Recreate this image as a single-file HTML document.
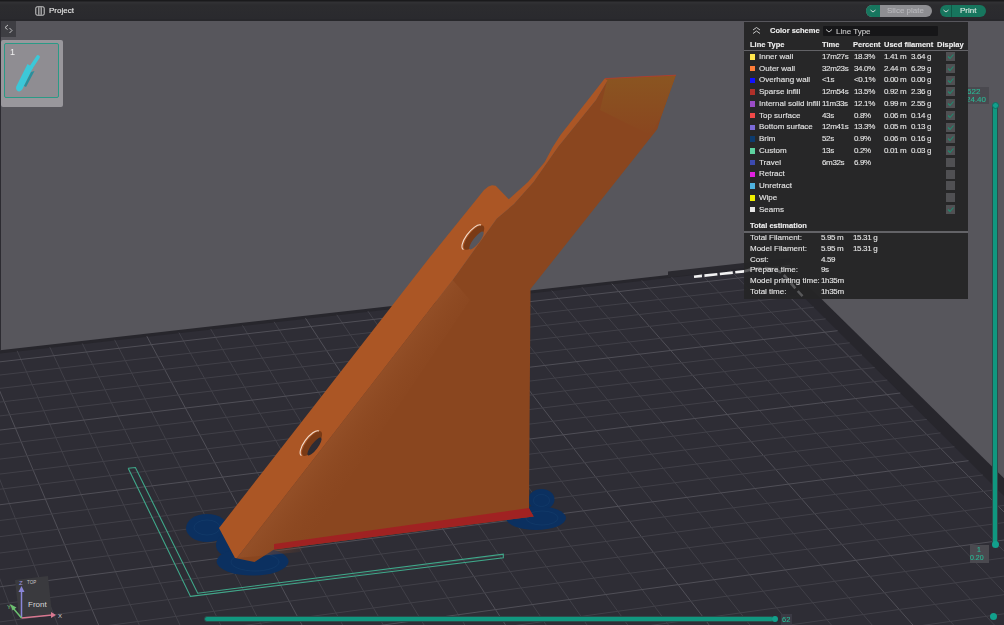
<!DOCTYPE html>
<html><head><meta charset="utf-8">
<style>
*{margin:0;padding:0;box-sizing:border-box}
html,body{width:1004px;height:625px;overflow:hidden;background:#57565c;font-family:"Liberation Sans",sans-serif;color:#e6e6e6}
#scene{position:absolute;left:0;top:0}
.abs{position:absolute}
#topbar{position:absolute;left:0;top:0;width:1004px;height:21px;background:linear-gradient(#1a1a1c 0,#1a1a1c 1px,#323235 2px,#2c2c2f 5px,#2a2a2e 19px,#242428 20px,#2a2a2e 21px)}
#panel{position:absolute;left:744px;top:22px;width:224px;height:277px;background:rgba(37,37,39,0.96)}
.t{position:absolute;will-change:transform;font-size:8px;line-height:10px;white-space:pre;color:#e4e4e4;-webkit-text-stroke:0.12px currentColor}
.b{font-weight:bold;font-size:7.5px}
.sw{position:absolute;width:5.3px;height:5.6px}
.cb{position:absolute;width:9px;height:9px;background:#505053}
.num{letter-spacing:-0.35px}
</style></head><body>
<svg id="scene" width="1004" height="625" viewBox="0 0 1004 625">
<polygon points="-183.0,370.8 783.8,261.9 1141.6,613.4 -55.2,786.0" fill="#27262c"/>
<polygon points="-182.0,374.0 772.6,266.2 1124.6,615.8 -55.2,786.0" fill="#2e2d35"/>
<line x1="-182.2" y1="373.3" x2="-55.2" y2="786.0" stroke="#504f57" stroke-width="1"/>
<line x1="-148.6" y1="369.5" x2="-12.9" y2="779.9" stroke="#414048" stroke-width="1"/>
<line x1="-115.1" y1="365.8" x2="29.2" y2="773.8" stroke="#414048" stroke-width="1"/>
<line x1="-81.8" y1="362.0" x2="71.0" y2="767.8" stroke="#414048" stroke-width="1"/>
<line x1="-48.7" y1="358.3" x2="112.6" y2="761.8" stroke="#414048" stroke-width="1"/>
<line x1="-15.7" y1="354.5" x2="153.9" y2="755.9" stroke="#504f57" stroke-width="1"/>
<line x1="17.1" y1="350.8" x2="194.9" y2="749.9" stroke="#414048" stroke-width="1"/>
<line x1="49.8" y1="347.2" x2="235.7" y2="744.0" stroke="#414048" stroke-width="1"/>
<line x1="82.3" y1="343.5" x2="276.3" y2="738.2" stroke="#414048" stroke-width="1"/>
<line x1="114.6" y1="339.8" x2="316.6" y2="732.4" stroke="#414048" stroke-width="1"/>
<line x1="146.8" y1="336.2" x2="356.6" y2="726.6" stroke="#504f57" stroke-width="1"/>
<line x1="178.9" y1="332.6" x2="396.4" y2="720.9" stroke="#414048" stroke-width="1"/>
<line x1="210.7" y1="329.0" x2="436.0" y2="715.2" stroke="#414048" stroke-width="1"/>
<line x1="242.5" y1="325.4" x2="475.3" y2="709.5" stroke="#414048" stroke-width="1"/>
<line x1="274.1" y1="321.8" x2="514.4" y2="703.8" stroke="#414048" stroke-width="1"/>
<line x1="305.5" y1="318.3" x2="553.3" y2="698.2" stroke="#504f57" stroke-width="1"/>
<line x1="336.8" y1="314.8" x2="591.9" y2="692.7" stroke="#414048" stroke-width="1"/>
<line x1="367.9" y1="311.2" x2="630.4" y2="687.1" stroke="#414048" stroke-width="1"/>
<line x1="398.9" y1="307.7" x2="668.5" y2="681.6" stroke="#414048" stroke-width="1"/>
<line x1="429.8" y1="304.3" x2="706.5" y2="676.1" stroke="#414048" stroke-width="1"/>
<line x1="460.5" y1="300.8" x2="744.2" y2="670.7" stroke="#504f57" stroke-width="1"/>
<line x1="491.0" y1="297.3" x2="781.7" y2="665.3" stroke="#414048" stroke-width="1"/>
<line x1="521.4" y1="293.9" x2="819.0" y2="659.9" stroke="#414048" stroke-width="1"/>
<line x1="551.7" y1="290.5" x2="856.1" y2="654.5" stroke="#414048" stroke-width="1"/>
<line x1="581.8" y1="287.1" x2="893.0" y2="649.2" stroke="#414048" stroke-width="1"/>
<line x1="611.8" y1="283.7" x2="929.6" y2="643.9" stroke="#504f57" stroke-width="1"/>
<line x1="641.7" y1="280.3" x2="966.0" y2="638.7" stroke="#414048" stroke-width="1"/>
<line x1="671.4" y1="277.0" x2="1002.3" y2="633.5" stroke="#414048" stroke-width="1"/>
<line x1="701.0" y1="273.6" x2="1038.3" y2="628.3" stroke="#414048" stroke-width="1"/>
<line x1="730.4" y1="270.3" x2="1074.1" y2="623.1" stroke="#414048" stroke-width="1"/>
<line x1="759.8" y1="267.0" x2="1109.7" y2="618.0" stroke="#504f57" stroke-width="1"/>
<line x1="-179.5" y1="382.2" x2="779.8" y2="273.3" stroke="#504f57" stroke-width="1"/>
<line x1="-175.5" y1="395.1" x2="791.0" y2="284.4" stroke="#414048" stroke-width="1"/>
<line x1="-171.5" y1="408.2" x2="802.3" y2="295.7" stroke="#414048" stroke-width="1"/>
<line x1="-167.4" y1="421.6" x2="813.9" y2="307.2" stroke="#414048" stroke-width="1"/>
<line x1="-163.2" y1="435.1" x2="825.6" y2="318.9" stroke="#414048" stroke-width="1"/>
<line x1="-159.0" y1="448.9" x2="837.6" y2="330.7" stroke="#504f57" stroke-width="1"/>
<line x1="-154.6" y1="462.9" x2="849.7" y2="342.8" stroke="#414048" stroke-width="1"/>
<line x1="-150.2" y1="477.2" x2="862.0" y2="355.0" stroke="#414048" stroke-width="1"/>
<line x1="-145.8" y1="491.8" x2="874.6" y2="367.5" stroke="#414048" stroke-width="1"/>
<line x1="-141.2" y1="506.6" x2="887.3" y2="380.1" stroke="#414048" stroke-width="1"/>
<line x1="-136.6" y1="521.7" x2="900.3" y2="393.0" stroke="#504f57" stroke-width="1"/>
<line x1="-131.8" y1="537.0" x2="913.4" y2="406.1" stroke="#414048" stroke-width="1"/>
<line x1="-127.0" y1="552.7" x2="926.8" y2="419.4" stroke="#414048" stroke-width="1"/>
<line x1="-122.1" y1="568.6" x2="940.5" y2="432.9" stroke="#414048" stroke-width="1"/>
<line x1="-117.1" y1="584.8" x2="954.4" y2="446.7" stroke="#414048" stroke-width="1"/>
<line x1="-112.0" y1="601.4" x2="968.5" y2="460.7" stroke="#504f57" stroke-width="1"/>
<line x1="-106.8" y1="618.2" x2="982.8" y2="475.0" stroke="#414048" stroke-width="1"/>
<line x1="-101.5" y1="635.4" x2="997.5" y2="489.5" stroke="#414048" stroke-width="1"/>
<line x1="-96.2" y1="652.9" x2="1012.3" y2="504.3" stroke="#414048" stroke-width="1"/>
<line x1="-90.6" y1="670.8" x2="1027.5" y2="519.4" stroke="#414048" stroke-width="1"/>
<line x1="-85.0" y1="689.1" x2="1042.9" y2="534.7" stroke="#504f57" stroke-width="1"/>
<line x1="-79.3" y1="707.7" x2="1058.7" y2="550.3" stroke="#414048" stroke-width="1"/>
<line x1="-73.5" y1="726.6" x2="1074.7" y2="566.2" stroke="#414048" stroke-width="1"/>
<line x1="-67.5" y1="746.0" x2="1091.0" y2="582.4" stroke="#414048" stroke-width="1"/>
<line x1="-61.4" y1="765.8" x2="1107.6" y2="599.0" stroke="#414048" stroke-width="1"/>
<line x1="-55.2" y1="786.0" x2="1124.6" y2="615.8" stroke="#504f57" stroke-width="1"/>
<!-- back dark band -->
<polygon points="668,271.4 790,258 792,262 668,277.4" fill="#2a292f"/>
<!-- dashed line -->
<polyline points="694,276.7 744,271.4 790,266" fill="none" stroke="#f2f2f2" stroke-width="2.6" stroke-dasharray="13,2.5" stroke-dashoffset="5"/>
<!-- green L -->
<polyline points="128.2,468.2 190.5,596.4 503.3,557.7 503.3,554.1 197.7,593.2 135.4,467.5 128.2,468.2" fill="none" stroke="#3fa88a" stroke-width="1.1"/>
<!-- brim -->
<g fill="#0b3060">
<ellipse cx="207" cy="528" rx="21" ry="14"/>
<ellipse cx="228" cy="545" rx="12" ry="11"/>
<ellipse cx="252.6" cy="561.5" rx="36" ry="14"/>
<ellipse cx="541.5" cy="499.5" rx="13" ry="10.5"/>
<ellipse cx="536" cy="518" rx="30" ry="12"/>
</g>
<g fill="none" stroke="#1d4a78" stroke-width="0.7" opacity="0.45">
<ellipse cx="207" cy="527.5" rx="13" ry="7.5"/>
<ellipse cx="255" cy="562" rx="24" ry="9"/>
<ellipse cx="541.5" cy="500.5" rx="8" ry="6"/>
<ellipse cx="542" cy="518" rx="16" ry="7"/>
</g>
<!-- web / dark face -->
<polygon points="604.7,78.4 675.8,75.2 661.7,115 657.4,129 530.5,289 529,509 533.7,516.5 274,549.5 254.5,562 235,558 237,558 452.7,280 496.7,218.7 514,204 533.6,182 558,147 596,100 607.5,80.5" fill="#8a461f"/>
<defs><linearGradient id="moire" gradientUnits="userSpaceOnUse" x1="345" y1="420" x2="385" y2="450"><stop offset="0" stop-color="#96522a" stop-opacity="0.7"/><stop offset="1" stop-color="#8a461f" stop-opacity="0"/></linearGradient></defs>
<polygon points="237,558 452.7,280 470,300 300,552" fill="url(#moire)"/>
<!-- end face -->
<defs><linearGradient id="endg" x1="0" y1="0" x2="0" y2="1"><stop offset="0" stop-color="#8a5521"/><stop offset="1" stop-color="#8a461f"/></linearGradient></defs>
<polygon points="604.7,78.4 675.8,75.2 661.7,115 650,135 600,110 607,81" fill="url(#endg)"/>
<polyline points="605,78.6 640,76.8 676,75.2" fill="none" stroke="#b83a30" stroke-width="0.9" opacity="0.85"/>
<!-- red strip -->
<polygon points="274,544 529,508 533.7,516.5 274,549.5" fill="#a02222"/>
<!-- rail top face -->
<polygon points="219,528 430,257 476,200 484,190 488.4,186.6 492,185.3 495.7,185.8 508.8,199.2 528,182 544.8,161.9 552.6,147.3 560.5,135 604.7,78.4 607.5,80.5 596,100 558,147 533.6,182 514,204 496.7,218.7 452.7,280 237,558 235,558" fill="#ab5625"/>
<!-- holes -->
<ellipse cx="474" cy="237.5" rx="5.6" ry="15" transform="rotate(38 474 237.5)" fill="#7a3a15"/>
<ellipse cx="476.5" cy="240.5" rx="3.2" ry="11" transform="rotate(38 476.5 240.5)" fill="#57565c"/>
<path d="M463.5,249.5 A5.6,15 38 0 1 481,225" fill="none" stroke="#f2dccc" stroke-width="1.1"/>
<ellipse cx="312" cy="443.5" rx="5.6" ry="15" transform="rotate(37 312 443.5)" fill="#7a3a15"/>
<ellipse cx="314.5" cy="446.5" rx="3.2" ry="11" transform="rotate(37 314.5 446.5)" fill="#2c2b33"/>
<path d="M301.5,455.5 A5.6,15 37 0 1 319,431" fill="none" stroke="#f2dccc" stroke-width="1.1"/>
<!-- axis gizmo -->
<g>
<polygon points="15,580 48,576 52,614 19,617" fill="#3a3a3e"/>
<text x="28" y="607" font-family="Liberation Sans" font-size="8" fill="#d8d8d8">Front</text>
<line x1="21.5" y1="618" x2="21.5" y2="590" stroke="#8a86d8" stroke-width="1.5"/>
<polygon points="18.5,592 24.5,592 21.5,586" fill="#8a86d8"/>
<line x1="21.5" y1="618" x2="52" y2="615" stroke="#d87890" stroke-width="1.5"/>
<polygon points="51,612 51,618 56,615" fill="#d87890"/>
<line x1="21.5" y1="618" x2="13" y2="608" stroke="#6cc070" stroke-width="1.5"/><polygon points="10,604 16.5,607.5 12.5,610.5" fill="#6cc070"/><text x="27" y="584" font-family="Liberation Sans" font-size="4.5" fill="#c8c8c8">TOP</text>
<text x="19" y="585" font-family="Liberation Sans" font-size="6" fill="#9a96e0">Z</text>
<text x="58" y="618" font-family="Liberation Sans" font-size="6" fill="#d0d0d0">X</text>
<text x="7" y="609" font-family="Liberation Sans" font-size="6" fill="#80d080">Y</text>
</g>

</svg>
<div id="topbar"></div>
<!-- top bar content -->
<svg class="abs" style="left:34.5px;top:6px" width="10" height="10" viewBox="0 0 10 10"><rect x="0.8" y="0.8" width="8.4" height="8.4" rx="1.3" fill="none" stroke="#cfcfcf" stroke-width="1"/><line x1="3.5" y1="1.3" x2="3.5" y2="8.7" stroke="#cfcfcf" stroke-width="0.7"/><line x1="5" y1="1.3" x2="5" y2="8.7" stroke="#cfcfcf" stroke-width="0.7"/><line x1="6.5" y1="1.3" x2="6.5" y2="8.7" stroke="#cfcfcf" stroke-width="0.7"/></svg>
<div class="t" style="left:49px;top:5.5px;font-size:8px;color:#e8e8e8">Project</div>
<!-- slice plate button -->
<div class="abs" style="left:866px;top:5px;width:66px;height:12px;border-radius:6px;background:#8e8e92;overflow:hidden">
  <div class="abs" style="left:0;top:0;width:14px;height:12px;background:#17765e"></div>
</div>
<svg class="abs" style="left:869px;top:8px" width="8" height="6"><polyline points="1.5,2 4,4 6.5,2" fill="none" stroke="#e0e0e0" stroke-width="0.9"/></svg>
<div class="t" style="left:886.5px;top:6px;font-size:8px;color:#b8b8bc">Slice plate</div>
<div class="abs" style="left:940px;top:5px;width:46px;height:12px;border-radius:6px;background:#17765e"></div>
<div class="abs" style="left:951px;top:5px;width:1px;height:12px;background:#0f5a47"></div>
<svg class="abs" style="left:942px;top:8px" width="8" height="6"><polyline points="1.5,2 4,4 6.5,2" fill="none" stroke="#e0e0e0" stroke-width="0.9"/></svg>
<div class="t" style="left:959.5px;top:6px;font-size:8px;color:#d8e8e0">Print</div>
<div class="abs" style="left:0;top:21px;width:1px;height:330px;background:#2c2b31"></div>
<!-- collapse button & thumbnail -->
<div class="abs" style="left:1px;top:21px;width:15px;height:16px;background:#3e3e43"></div>
<svg class="abs" style="left:2px;top:23px" width="13" height="12"><polyline points="6,2 3,4.5 5.5,6.5" fill="none" stroke="#d0d0d0" stroke-width="0.9"/><polyline points="7.5,5 10,7.5 7.5,10" fill="none" stroke="#d0d0d0" stroke-width="0.9"/></svg>
<div class="abs" style="left:1px;top:40px;width:62px;height:67px;background:#99979c;border-radius:2px"></div>
<div class="abs" style="left:4px;top:43px;width:55px;height:55px;border:1.8px solid #2a9a86;border-radius:2px;background:#8f8d92"></div>
<div class="t" style="left:10px;top:47px;font-size:9px;color:#f0f0f0;-webkit-text-stroke:0">1</div>
<svg class="abs" style="left:0;top:35px" width="70" height="75" viewBox="0 0 70 75"><line x1="38" y1="22" x2="30" y2="34" stroke="#3cc8d8" stroke-width="3.8" stroke-linecap="round"/><path d="M27.5,29 L33,32.5 L22.5,54 Q20,58 17,55.5 Q15,53 17,50 Z" fill="#3cc8d8"/><path d="M31,37 L34.5,36 L26,52 L24,51 Z" fill="#2b8f9b"/></svg>
<!-- vertical slider -->
<div class="abs" style="left:991.8px;top:105px;width:6.4px;height:440px;background:#10977f;border:1px solid #2b4d4b;border-radius:2px"></div>
<div class="abs" style="left:991.5px;top:101.5px;width:7px;height:7px;border-radius:50%;background:#12a08c;border:1px solid #0c6f62"></div>
<div class="abs" style="left:991.5px;top:541px;width:7px;height:7px;border-radius:50%;background:#12a08c"></div>
<div class="abs" style="left:968px;top:87px;width:21px;height:17px;background:#4a494f"></div>
<div class="t" style="left:966.5px;top:87.5px;font-size:8px;line-height:8px;color:#2ab895">622</div>
<div class="t" style="left:966px;top:95.5px;font-size:8px;line-height:8px;color:#2ab895">24.40</div>
<div class="abs" style="left:969.5px;top:545px;width:19px;height:18px;background:#4a494f"></div>
<div class="t" style="left:977px;top:546px;font-size:7px;line-height:8px;color:#2ab895">1</div>
<div class="t" style="left:970px;top:554px;font-size:7px;line-height:8px;color:#2ab895">0.20</div>
<div class="abs" style="left:989.5px;top:613px;width:7px;height:7px;border-radius:50%;background:#12a08c"></div>
<!-- horizontal slider -->
<div class="abs" style="left:203.5px;top:615.5px;width:570px;height:6px;background:#10977f;border:1px solid #2b4d4b;border-radius:3px"></div>
<div class="abs" style="left:771.5px;top:615.5px;width:6.5px;height:6.5px;border-radius:50%;background:#12a08c"></div>
<div class="abs" style="left:781px;top:614px;width:11px;height:11px;background:#3b3a44"></div>
<div class="t" style="left:782px;top:615px;font-size:7.5px;line-height:9px;color:#2ab895">62</div>

<!-- legend panel -->
<div id="panel"></div>
<svg class="abs" style="left:744px;top:255px" width="80" height="50"><path d="M0,16.3 C12,13 24,11 36.4,17 C42,21 50,33 60.2,42.7" fill="none" stroke="#58585a" stroke-width="2.6" stroke-dasharray="7,3.5"/></svg>
<svg class="abs" style="left:751px;top:26px" width="11" height="9"><polyline points="2,4 5.5,1.5 9,4" fill="none" stroke="#d8d8d8" stroke-width="0.9"/><polyline points="2,7.5 5.5,5 9,7.5" fill="none" stroke="#d8d8d8" stroke-width="0.9"/></svg>
<div class="t b" style="left:770px;top:26.1px;color:#f0f0f0">Color scheme</div>
<div class="abs" style="left:823px;top:26px;width:115px;height:10px;background:#161618;border-radius:1px"></div>
<svg class="abs" style="left:825px;top:28px" width="8" height="6"><polyline points="1,1.5 4,4 7,1.5" fill="none" stroke="#d8d8d8" stroke-width="0.9"/></svg>
<div class="t" style="left:836px;top:26.5px;color:#c8c8c8">Line Type</div>
<div class="t b" style="left:749.6px;top:39.9px;color:#f0f0f0">Line Type</div>
<div class="t b" style="left:822px;top:39.9px;color:#f0f0f0">Time</div>
<div class="t b" style="left:853.3px;top:39.9px;color:#f0f0f0">Percent</div>
<div class="t b" style="left:883.7px;top:39.9px;color:#f0f0f0">Used filament</div>
<div class="t b" style="left:937px;top:39.9px;color:#f0f0f0">Display</div>
<div class="abs" style="left:744px;top:49.8px;width:224px;height:1.2px;background:#636367"></div>
<div class="sw" style="left:749.5px;top:54.00px;background:#ffe64d"></div>
<div class="t" style="left:759px;top:51.80px">Inner wall</div>
<div class="t num" style="left:822px;top:51.80px">17m27s</div>
<div class="t num" style="left:853.5px;top:51.80px">18.3%</div>
<div class="t num" style="left:883.7px;top:51.80px">1.41 m</div>
<div class="t num" style="left:910.7px;top:51.80px">3.64 g</div>
<div class="cb" style="left:946px;top:52.00px"></div>
<svg class="abs" style="left:946px;top:52.00px" width="9" height="9"><polyline points="2,4.5 4,6.5 7.5,2.5" fill="none" stroke="#208a6e" stroke-width="1.1"/></svg>
<div class="sw" style="left:749.5px;top:65.75px;background:#ff7d38"></div>
<div class="t" style="left:759px;top:63.55px">Outer wall</div>
<div class="t num" style="left:822px;top:63.55px">32m23s</div>
<div class="t num" style="left:853.5px;top:63.55px">34.0%</div>
<div class="t num" style="left:883.7px;top:63.55px">2.44 m</div>
<div class="t num" style="left:910.7px;top:63.55px">6.29 g</div>
<div class="cb" style="left:946px;top:63.75px"></div>
<svg class="abs" style="left:946px;top:63.75px" width="9" height="9"><polyline points="2,4.5 4,6.5 7.5,2.5" fill="none" stroke="#208a6e" stroke-width="1.1"/></svg>
<div class="sw" style="left:749.5px;top:77.50px;background:#1010ff"></div>
<div class="t" style="left:759px;top:75.30px">Overhang wall</div>
<div class="t num" style="left:822px;top:75.30px">&lt;1s</div>
<div class="t num" style="left:853.5px;top:75.30px">&lt;0.1%</div>
<div class="t num" style="left:883.7px;top:75.30px">0.00 m</div>
<div class="t num" style="left:910.7px;top:75.30px">0.00 g</div>
<div class="cb" style="left:946px;top:75.50px"></div>
<svg class="abs" style="left:946px;top:75.50px" width="9" height="9"><polyline points="2,4.5 4,6.5 7.5,2.5" fill="none" stroke="#208a6e" stroke-width="1.1"/></svg>
<div class="sw" style="left:749.5px;top:89.25px;background:#b03029"></div>
<div class="t" style="left:759px;top:87.05px">Sparse infill</div>
<div class="t num" style="left:822px;top:87.05px">12m54s</div>
<div class="t num" style="left:853.5px;top:87.05px">13.5%</div>
<div class="t num" style="left:883.7px;top:87.05px">0.92 m</div>
<div class="t num" style="left:910.7px;top:87.05px">2.36 g</div>
<div class="cb" style="left:946px;top:87.25px"></div>
<svg class="abs" style="left:946px;top:87.25px" width="9" height="9"><polyline points="2,4.5 4,6.5 7.5,2.5" fill="none" stroke="#208a6e" stroke-width="1.1"/></svg>
<div class="sw" style="left:749.5px;top:101.00px;background:#9a4cc6"></div>
<div class="t" style="left:759px;top:98.80px">Internal solid infill</div>
<div class="t num" style="left:822px;top:98.80px">11m33s</div>
<div class="t num" style="left:853.5px;top:98.80px">12.1%</div>
<div class="t num" style="left:883.7px;top:98.80px">0.99 m</div>
<div class="t num" style="left:910.7px;top:98.80px">2.55 g</div>
<div class="cb" style="left:946px;top:99.00px"></div>
<svg class="abs" style="left:946px;top:99.00px" width="9" height="9"><polyline points="2,4.5 4,6.5 7.5,2.5" fill="none" stroke="#208a6e" stroke-width="1.1"/></svg>
<div class="sw" style="left:749.5px;top:112.75px;background:#f04848"></div>
<div class="t" style="left:759px;top:110.55px">Top surface</div>
<div class="t num" style="left:822px;top:110.55px">43s</div>
<div class="t num" style="left:853.5px;top:110.55px">0.8%</div>
<div class="t num" style="left:883.7px;top:110.55px">0.06 m</div>
<div class="t num" style="left:910.7px;top:110.55px">0.14 g</div>
<div class="cb" style="left:946px;top:110.75px"></div>
<svg class="abs" style="left:946px;top:110.75px" width="9" height="9"><polyline points="2,4.5 4,6.5 7.5,2.5" fill="none" stroke="#208a6e" stroke-width="1.1"/></svg>
<div class="sw" style="left:749.5px;top:124.50px;background:#7b6ad8"></div>
<div class="t" style="left:759px;top:122.30px">Bottom surface</div>
<div class="t num" style="left:822px;top:122.30px">12m41s</div>
<div class="t num" style="left:853.5px;top:122.30px">13.3%</div>
<div class="t num" style="left:883.7px;top:122.30px">0.05 m</div>
<div class="t num" style="left:910.7px;top:122.30px">0.13 g</div>
<div class="cb" style="left:946px;top:122.50px"></div>
<svg class="abs" style="left:946px;top:122.50px" width="9" height="9"><polyline points="2,4.5 4,6.5 7.5,2.5" fill="none" stroke="#208a6e" stroke-width="1.1"/></svg>
<div class="sw" style="left:749.5px;top:136.25px;background:#0c3b6e"></div>
<div class="t" style="left:759px;top:134.05px">Brim</div>
<div class="t num" style="left:822px;top:134.05px">52s</div>
<div class="t num" style="left:853.5px;top:134.05px">0.9%</div>
<div class="t num" style="left:883.7px;top:134.05px">0.06 m</div>
<div class="t num" style="left:910.7px;top:134.05px">0.16 g</div>
<div class="cb" style="left:946px;top:134.25px"></div>
<svg class="abs" style="left:946px;top:134.25px" width="9" height="9"><polyline points="2,4.5 4,6.5 7.5,2.5" fill="none" stroke="#208a6e" stroke-width="1.1"/></svg>
<div class="sw" style="left:749.5px;top:148.00px;background:#5ed3a0"></div>
<div class="t" style="left:759px;top:145.80px">Custom</div>
<div class="t num" style="left:822px;top:145.80px">13s</div>
<div class="t num" style="left:853.5px;top:145.80px">0.2%</div>
<div class="t num" style="left:883.7px;top:145.80px">0.01 m</div>
<div class="t num" style="left:910.7px;top:145.80px">0.03 g</div>
<div class="cb" style="left:946px;top:146.00px"></div>
<svg class="abs" style="left:946px;top:146.00px" width="9" height="9"><polyline points="2,4.5 4,6.5 7.5,2.5" fill="none" stroke="#208a6e" stroke-width="1.1"/></svg>
<div class="sw" style="left:749.5px;top:159.75px;background:#3c4ab0"></div>
<div class="t" style="left:759px;top:157.55px">Travel</div>
<div class="t num" style="left:822px;top:157.55px">6m32s</div>
<div class="t num" style="left:853.5px;top:157.55px">6.9%</div>
<div class="cb" style="left:946px;top:157.75px"></div>
<div class="sw" style="left:749.5px;top:171.50px;background:#e020e0"></div>
<div class="t" style="left:759px;top:169.30px">Retract</div>
<div class="cb" style="left:946px;top:169.50px"></div>
<div class="sw" style="left:749.5px;top:183.25px;background:#4fb3e0"></div>
<div class="t" style="left:759px;top:181.05px">Unretract</div>
<div class="cb" style="left:946px;top:181.25px"></div>
<div class="sw" style="left:749.5px;top:195.00px;background:#f0f000"></div>
<div class="t" style="left:759px;top:192.80px">Wipe</div>
<div class="cb" style="left:946px;top:193.00px"></div>
<div class="sw" style="left:749.5px;top:206.75px;background:#e6e6e6"></div>
<div class="t" style="left:759px;top:204.55px">Seams</div>
<div class="cb" style="left:946px;top:204.75px"></div>
<svg class="abs" style="left:946px;top:204.75px" width="9" height="9"><polyline points="2,4.5 4,6.5 7.5,2.5" fill="none" stroke="#208a6e" stroke-width="1.1"/></svg>
<div class="t b" style="left:749.7px;top:220.8px;color:#f0f0f0">Total estimation</div>
<div class="abs" style="left:744px;top:231.4px;width:224px;height:1.2px;background:#636367"></div>
<div class="t" style="left:749.7px;top:233.33px">Total Filament:</div>
<div class="t num" style="left:821.3px;top:233.33px">5.95 m</div>
<div class="t num" style="left:852.7px;top:233.33px">15.31 g</div>
<div class="t" style="left:749.7px;top:244.01px">Model Filament:</div>
<div class="t num" style="left:821.3px;top:244.01px">5.95 m</div>
<div class="t num" style="left:852.7px;top:244.01px">15.31 g</div>
<div class="t" style="left:749.7px;top:254.69px">Cost:</div>
<div class="t num" style="left:821.3px;top:254.69px">4.59</div>
<div class="t" style="left:749.7px;top:265.37px">Prepare time:</div>
<div class="t num" style="left:821.3px;top:265.37px">9s</div>
<div class="t" style="left:749.7px;top:276.05px">Model printing time:</div>
<div class="t num" style="left:821.3px;top:276.05px">1h35m</div>
<div class="t" style="left:749.7px;top:286.73px">Total time:</div>
<div class="t num" style="left:821.3px;top:286.73px">1h35m</div>

</body></html>
